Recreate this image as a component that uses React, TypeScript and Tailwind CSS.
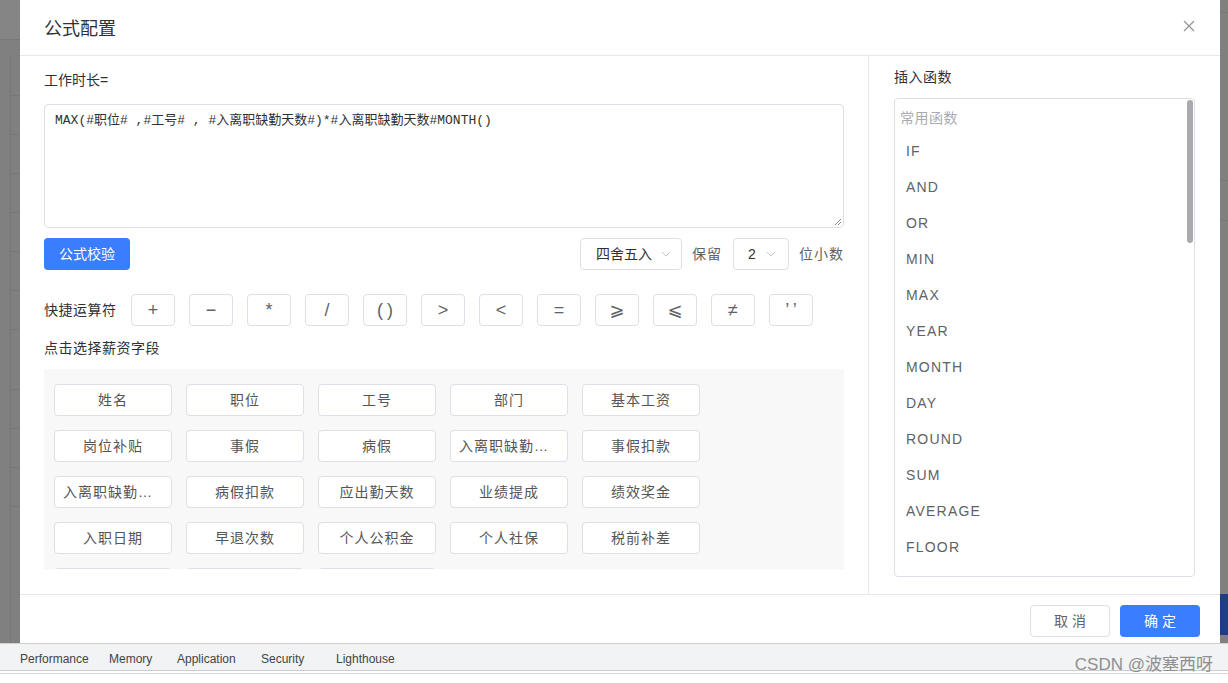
import * as React from 'react'

const operators = ['+', '−', '*', '/', '()', '>', '<', '=', '⩾', '⩽', '≠', '’’']

const fieldRows = [
  ['姓名', '职位', '工号', '部门', '基本工资'],
  ['岗位补贴', '事假', '病假', '入离职缺勤天数', '事假扣款'],
  ['入离职缺勤天数', '病假扣款', '应出勤天数', '业绩提成', '绩效奖金'],
  ['入职日期', '早退次数', '个人公积金', '个人社保', '税前补差'],
  ['迟到次数', '迟到扣款', '实发工资'],
]

const functions = ['IF', 'AND', 'OR', 'MIN', 'MAX', 'YEAR', 'MONTH', 'DAY', 'ROUND', 'SUM', 'AVERAGE', 'FLOOR', 'CEILING']

const devTabs = [
  { label: 'Performance', w: 'w-[89px]' },
  { label: 'Memory', w: 'w-[68px]' },
  { label: 'Application', w: 'w-[84px]' },
  { label: 'Security', w: 'w-[75px]' },
  { label: 'Lighthouse', w: 'w-[80px]' },
]

function Chevron() {
  return (
    <svg width="10" height="6" viewBox="0 0 10 6" fill="none" className="shrink-0">
      <path d="M1 1l4 4 4-4" stroke="#c0c4cc" strokeWidth="1" />
    </svg>
  )
}

export default function App() {
  return (
    <div className="w-[1228px] h-[683px] overflow-hidden bg-white font-['Liberation_Sans','Noto_Sans_CJK_SC',sans-serif] flex flex-col">
      <div className="flex h-[643px] shrink-0">
        {/* dimmed page behind, left */}
        <div className="w-[20px] bg-[#808080] flex flex-col">
          <div className="h-[40px] bg-[#858585] border-b border-[#777]" />
          <div className="h-[17px]" />
          <div className="flex-1 ml-[10px] border-l border-[#777] flex flex-col">
            <div className="h-[39px] border-b border-[#777]" />
            <div className="h-[39px] border-b border-[#777]" />
            <div className="h-[39px] border-b border-[#777]" />
            <div className="h-[39px] border-b border-[#777]" />
            <div className="h-[39px] border-b border-[#777]" />
            <div className="h-[39px] border-b border-[#777]" />
            <div className="h-[39px] border-b border-[#777]" />
            <div className="h-[60px] border-b border-[#777]" />
            <div className="h-[39px] border-b border-[#777]" />
            <div className="h-[39px] border-b border-[#777]" />
            <div className="h-[39px] border-b border-[#777]" />
          </div>
        </div>

        {/* modal */}
        <div className="w-[1200px] bg-white flex flex-col">
          <div className="h-[56px] border-b border-[#e8e8e8] flex items-center justify-between pl-[24px] pr-[24px] shrink-0">
            <span className="text-[18px] text-[#303133] pt-[4px]">公式配置</span>
            <svg width="12" height="12" viewBox="0 0 12 12" className="mb-[4px] mr-[1px]">
              <path d="M1 1l10 10M11 1L1 11" stroke="#909399" strokeWidth="1.2" />
            </svg>
          </div>

          <div className="flex h-[538px] shrink-0">
            {/* left */}
            <div className="w-[849px] border-r border-[#e8e8e8] px-[24px] pt-[14px]">
              <div className="h-5 leading-5 text-[14px] text-[#303133]">工作时长=</div>
              <div className="mt-[14px] h-[124px] border border-[#dcdfe6] rounded-[4px] relative px-[10px] pt-[6px]">
                <div className="font-['Liberation_Mono','Noto_Sans_CJK_SC',monospace] text-[13px] leading-5 text-[#303133]">
                  MAX(#职位# ,#工号# , #入离职缺勤天数#)*#入离职缺勤天数#MONTH()
                </div>
                <svg width="8" height="8" viewBox="0 0 8 8" className="absolute right-[1px] bottom-[1px]">
                  <path d="M7 1L1 7M7 4L4 7" stroke="#888" strokeWidth="1" />
                </svg>
              </div>

              <div className="mt-[10px] flex items-center h-8">
                <button className="h-8 w-[86px] rounded-[4px] bg-[#3a7dff] text-white text-[14px]">公式校验</button>
                <div className="flex-1" />
                <div className="h-8 w-[102px] border border-[#dcdfe6] rounded-[4px] flex items-center pl-[15px] gap-[9px] text-[14px] text-[#303133]">
                  四舍五入
                  <Chevron />
                </div>
                <span className="ml-[10px] text-[14px] text-[#606266] tracking-[1px]">保留</span>
                <div className="ml-[11px] h-8 w-[56px] border border-[#dcdfe6] rounded-[4px] flex items-center pl-[14px] gap-[10px] text-[14px] text-[#303133]">
                  2
                  <Chevron />
                </div>
                <span className="ml-[10px] text-[14px] text-[#606266] tracking-[1px]">位小数</span>
              </div>

              <div className="mt-[24px] flex items-center h-8">
                <span className="w-[87px] text-[14px] text-[#303133] tracking-[0.5px]">快捷运算符</span>
                <div className="flex gap-[14px]">
                  {operators.map(op => (
                    <div
                      key={op}
                      className="w-[44px] h-8 border border-[#dcdfe6] rounded-[4px] flex items-center justify-center text-[18px] text-[#606266] font-['Liberation_Sans','DejaVu_Sans',sans-serif]"
                    >
                      <span className={op.length > 1 ? 'tracking-[4px] pl-[4px]' : ''}>{op}</span>
                    </div>
                  ))}
                </div>
              </div>

              <div className="mt-3 h-5 leading-5 text-[14px] text-[#303133] tracking-[0.5px]">点击选择薪资字段</div>

              <div className="mt-[11px] h-[200px] overflow-hidden bg-[#f8f8f8] pl-[10px] pt-[15px] flex flex-col gap-[14px]">
                {fieldRows.map((row, i) => (
                  <div key={i} className="flex gap-[14px] shrink-0">
                    {row.map((f, j) => (
                      <div
                        key={j}
                        className="w-[118px] h-8 bg-white border border-[#dcdfe6] rounded-[4px] flex items-center justify-center px-[8px] text-[14px] text-[#555] tracking-[1px]"
                      >
                        <span className="truncate">{f}</span>
                      </div>
                    ))}
                  </div>
                ))}
              </div>
            </div>

            {/* right */}
            <div className="w-[351px] pl-[25px] pr-[25px] pt-[11px]">
              <div className="h-5 leading-5 text-[14px] text-[#303133] tracking-[0.5px]">插入函数</div>
              <div className="mt-[11px] h-[479px] border border-[#dcdfe6] rounded-[4px] overflow-hidden relative">
                <div className="h-[34px] pt-[9px] pl-[5px] leading-5 text-[14px] text-[#a8abb2] tracking-[0.5px]">常用函数</div>
                {functions.map(fn => (
                  <div key={fn} className="h-9 flex items-center pl-[11px] text-[14px] text-[#606266] tracking-[1.2px]">
                    {fn}
                  </div>
                ))}
                <div className="absolute right-[1px] top-[1px] w-[6px] h-[143px] rounded-[3px] bg-[#a9a9ae]" />
              </div>
            </div>
          </div>

          <div className="flex-1 border-t border-[#e8e8e8] flex justify-end items-start pt-[10px] pr-[20px] gap-[10px]">
            <button className="w-[80px] h-8 border border-[#dcdfe6] rounded-[4px] bg-white text-[14px] text-[#606266]">取 消</button>
            <button className="w-[80px] h-8 rounded-[4px] bg-[#3a7dff] text-[14px] text-white">确 定</button>
          </div>
        </div>

        {/* dimmed page behind, right */}
        <div className="w-[8px] bg-[#808080] flex flex-col">
          <div className="h-[13px] border-b border-[#777]" />
          <div className="h-[168px] border-b border-[#777]" />
          <div className="h-[40px] border-b border-[#777]" />
          <div className="h-[373px]" />
          <div className="h-[41px] bg-[#1d3e82]" />
        </div>
      </div>

      {/* devtools tab strip */}
      <div className="h-[28px] bg-[#f1f3f4] border-t border-[#d0d0d0] border-b border-b-[#cbcdd1] flex items-center pl-[20px] pt-[3px] text-[12px] text-[#444] relative">
        {devTabs.map(t => (
          <span key={t.label} className={t.w}>{t.label}</span>
        ))}
        <span className="absolute right-[15px] top-[11px] text-[17px] text-[#8f8f8f] leading-5 whitespace-nowrap">CSDN @波塞西呀</span>
      </div>
      <div className="h-[3px] border-b border-[#d8d8d8]" />
    </div>
  )
}
